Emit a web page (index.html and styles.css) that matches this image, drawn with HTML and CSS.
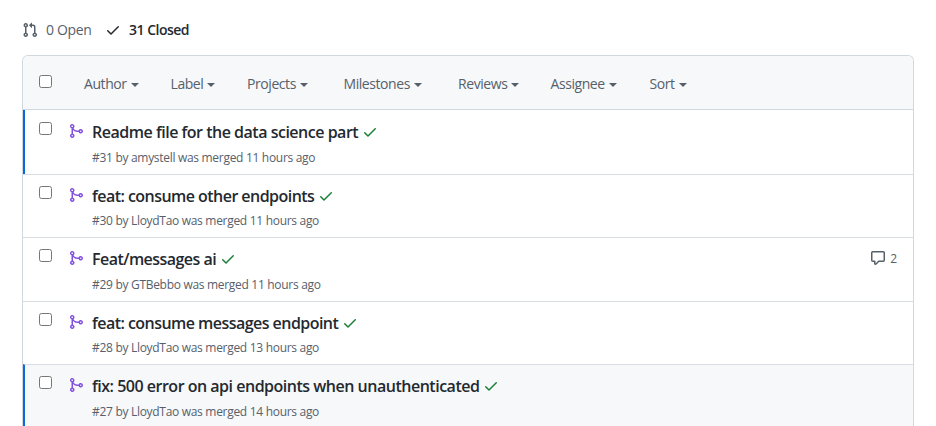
FILE: index.html
```html
<!DOCTYPE html>
<html lang="en">
<head>
<meta charset="utf-8">
<title>Pull requests</title>
<link rel="stylesheet" href="styles.css">
</head>
<body>
<svg class="defs" aria-hidden="true">
  <symbol id="pr" viewBox="0 0 16 16"><path fill-rule="evenodd" d="M7.177 3.073L9.573.677A.25.25 0 0110 .854v4.792a.25.25 0 01-.427.177L7.177 3.427a.25.25 0 010-.354zM3.75 2.5a.75.75 0 100 1.5.75.75 0 000-1.5zm-2.25.75a2.25 2.25 0 113 2.122v5.256a2.251 2.251 0 11-1.5 0V5.372A2.25 2.25 0 011.5 3.25zM11 2.5h-1V4h1a1 1 0 011 1v5.628a2.251 2.251 0 101.5 0V5A2.5 2.5 0 0011 2.5zm1 10.25a.75.75 0 111.5 0 .75.75 0 01-1.5 0zM3.75 12a.75.75 0 100 1.5.75.75 0 000-1.5z"/></symbol>
  <symbol id="check" viewBox="0 0 16 16"><path fill-rule="evenodd" d="M13.78 4.22a.75.75 0 010 1.06l-7.25 7.25a.75.75 0 01-1.06 0L2.22 9.28a.75.75 0 011.06-1.06L6 10.94l6.72-6.72a.75.75 0 011.06 0z"/></symbol>
  <symbol id="merge" viewBox="0 0 16 16"><path fill-rule="evenodd" d="M5 3.254V3.25v.005a.75.75 0 110-.005v.004zm.45 1.9a2.25 2.25 0 10-1.95.218v5.256a2.25 2.25 0 101.5 0V7.123A5.735 5.735 0 009.25 9h1.378a2.251 2.251 0 100-1.5H9.25a4.25 4.25 0 01-3.8-2.346zM12.75 9a.75.75 0 100-1.5.75.75 0 000 1.5zm-8.5 4.5a.75.75 0 100-1.5.75.75 0 000 1.5z"/></symbol>
  <symbol id="comment" viewBox="0 0 16 16"><path fill-rule="evenodd" d="M2.75 2.5a.25.25 0 00-.25.25v7.5c0 .138.112.25.25.25h2a.75.75 0 01.75.75v2.19l2.72-2.72a.75.75 0 01.53-.22h4.5a.25.25 0 00.25-.25v-7.5a.25.25 0 00-.25-.25H2.75zM1 2.75C1 1.784 1.784 1 2.75 1h10.5c.966 0 1.75.784 1.75 1.75v7.5A1.75 1.75 0 0113.25 12H9.06l-2.573 2.573A1.457 1.457 0 014 13.543V12H2.75A1.75 1.75 0 011 10.25v-7.5z"/></symbol>
</svg>
<nav class="states">
  <a class="state"><svg class="icon"><use href="#pr"/></svg><span class="open">0 Open</span></a>
  <a class="state selected"><svg class="icon"><use href="#check"/></svg><span class="closed">31 Closed</span></a>
</nav>
<main class="box">
  <header class="head">
    <input type="checkbox" class="cb">
    <div class="filters">
      <span class="filter">Author</span><span class="filter">Label</span><span class="filter">Projects</span><span class="filter">Milestones</span><span class="filter">Reviews</span><span class="filter">Assignee</span><span class="filter">Sort</span>
    </div>
  </header>
  <article class="row unread">
    <input type="checkbox" class="cb"><svg class="icon merged"><use href="#merge"/></svg>
    <div class="text"><h2 class="title">Readme file for the data science part<svg class="icon ok"><use href="#check"/></svg></h2><p class="meta">#31 by amystell was merged 11 hours ago</p></div>
  </article>
  <article class="row">
    <input type="checkbox" class="cb"><svg class="icon merged"><use href="#merge"/></svg>
    <div class="text"><h2 class="title tight">feat: consume other endpoints<svg class="icon ok"><use href="#check"/></svg></h2><p class="meta">#30 by LloydTao was merged 11 hours ago</p></div>
  </article>
  <article class="row">
    <input type="checkbox" class="cb"><svg class="icon merged"><use href="#merge"/></svg>
    <div class="text"><h2 class="title tight">Feat/messages ai<svg class="icon ok"><use href="#check"/></svg></h2><p class="meta">#29 by GTBebbo was merged 11 hours ago</p></div>
    <a class="comments"><svg class="icon"><use href="#comment"/></svg><span>2</span></a>
  </article>
  <article class="row">
    <input type="checkbox" class="cb"><svg class="icon merged"><use href="#merge"/></svg>
    <div class="text"><h2 class="title tight">feat: consume messages endpoint<svg class="icon ok"><use href="#check"/></svg></h2><p class="meta">#28 by LloydTao was merged 13 hours ago</p></div>
  </article>
  <article class="row unread focused">
    <input type="checkbox" class="cb"><svg class="icon merged"><use href="#merge"/></svg>
    <div class="text"><h2 class="title">fix: 500 error on api endpoints when unauthenticated<svg class="icon ok"><use href="#check"/></svg></h2><p class="meta">#27 by LloydTao was merged 14 hours ago</p></div>
  </article>
</main>
</body>
</html>
```
FILE: styles.css
```css
* { box-sizing: border-box; }
body {
  margin: 0;
  height: 426px;
  overflow: hidden;
  padding: 19px 22px 0;
  background: #fff;
  color: #24292f;
  font-family: "Segoe UI", "Open Sans", sans-serif;
  font-size: 14px;
  line-height: 21px;
}
.defs { display: none; }
.icon { width: 16px; height: 16px; flex: none; fill: currentColor; }
.states { display: flex; gap: 14px; height: 36px; color: #57606a; }
.state { display: flex; gap: 8px; height: 21px; align-items: center; white-space: nowrap; }
.selected { color: #24292f; font-weight: 600; }
.open { width: 45px; letter-spacing: -0.35px; }
.closed { letter-spacing: -0.5px; }
.box { border: 1px solid #d0d7de; border-bottom: 0; border-radius: 6px 6px 0 0; height: 371px; overflow: hidden; }
.head {
  display: flex;
  height: 54px;
  padding: 0 16px;
  background: #f6f8fa;
  border-bottom: 1px solid #d0d7de;
}
.head .cb { margin-top: 19px; }
.cb { width: 13px; height: 13px; margin: 0; flex: none; appearance: none; border: 1px solid #767676; border-radius: 2.5px; background: #fff; }
.filters {
  display: grid;
  grid-template-columns: 86.5px 76.5px 96.5px 114.5px 92.5px 99px auto;
  margin: 17px 0 0 32px;
  color: #57606a;
  letter-spacing: -0.43px;
}
.filter { display: flex; align-items: center; height: 21px; }
.filter::after { content: ""; margin: 3px 0 0 4px; border: 4px solid transparent; border-top-color: currentColor; border-bottom: 0; }
.row { display: flex; height: 63.5px; padding-left: 16px; border-top: 1px solid #d8dee4; }
.head + .row { border-top: 0; padding-top: 1px; }
.row:last-child { height: 62px; }
.row .cb { margin-top: 11px; }
.unread { padding-left: 14px; border-left: 2px solid #0969da; }
.focused { background: #f6f8fa; }
.merged { margin: 12px 8px 0 16px; color: #8250df; }
.text { flex: 1; white-space: nowrap; }
.title { display: flex; align-items: center; height: 24px; margin: 9px 0 0; font-size: 16px; font-weight: 600; line-height: 24px; letter-spacing: -0.49px; }
.tight { letter-spacing: -0.54px; }
.ok { margin-left: 4px; color: #1a7f37; }
.meta { margin: 4.75px 0 0; color: #57606a; font-size: 12px; line-height: 18px; letter-spacing: -0.3px; }
.comments { display: flex; gap: 4px; height: 16px; align-items: center; margin: 12px 16px 0 0; color: #57606a; font-size: 12px; }
```
